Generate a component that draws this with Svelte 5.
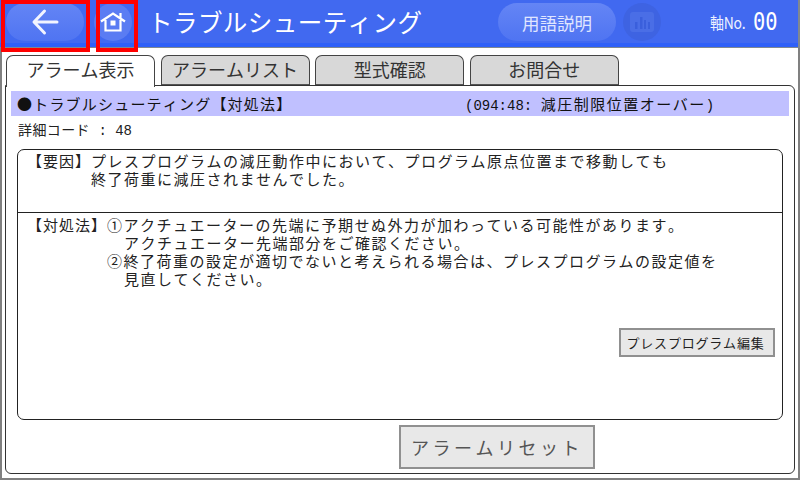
<script>
  const tabs = ['アラーム表示', 'アラームリスト', '型式確認', 'お問合せ'];
</script>

<div class="screen">
  <header class="header">
    <button class="pill back" aria-label="戻る">
      <svg width="30" height="30" viewBox="0 0 30 30"><path d="M27 15H5.500M14.500 4 4 15l10.500 11" fill="none" stroke="#f2f4ff" stroke-width="3" stroke-linecap="round" stroke-linejoin="round"/></svg>
    </button>
    <button class="round home" aria-label="ホーム">
      <svg width="26" height="20" viewBox="0 0 26 20"><path d="M1 9.500 13 1.500l12 8M5.500 8v10.500h15V8M20.500 1v6" fill="none" stroke="#fff" stroke-width="2.200"/><rect x="10.500" y="8.500" width="5" height="5" fill="#fff"/></svg>
    </button>
    <h1 class="title">トラブルシューティング</h1>
    <button class="pill terms">用語説明</button>
    <span class="round chart">
      <svg width="24" height="20" viewBox="0 0 24 20"><rect width="24" height="20" rx="3" fill="#4a6ee6"/><path d="M5 10h2.500v7H5zM10 5h2.500v12H10zM14 8h2v9h-2zM18 10h2v7h-2z" fill="#3a5fdc"/></svg>
    </span>
    <span class="axis"><span class="axis-label">軸No.</span><span class="axis-value">00</span></span>
  </header>

  <main class="body">
    <nav class="tabs">
      {#each tabs as t, i}
        <div class="tab" class:active={i === 0}>{t}</div>
      {/each}
    </nav>
    <section class="panel">
      <div class="banner">
        <span class="heading">●トラブルシューティング【対処法】</span>
        <span class="code"><span class="mono">{'(094:48: '}</span>減圧制限位置オーバー<span class="mono">)</span></span>
      </div>
      <div class="detail">詳細コード<span class="mono">{' : 48'}</span></div>
      <div class="box">
        <div class="cause">
          <span class="label">【要因】</span>
          <div>プレスプログラムの減圧動作中において、プログラム原点位置まで移動しても<br />終了荷重に減圧されませんでした。</div>
        </div>
        <div class="remedy">
          <span class="label wide">【対処法】</span>
          <div class="list">
            <div>①アクチュエーターの先端に予期せぬ外力が加わっている可能性があります。</div>
            <div class="indent">アクチュエーター先端部分をご確認ください。</div>
            <div>②終了荷重の設定が適切でないと考えられる場合は、プレスプログラムの設定値を</div>
            <div class="indent">見直してください。</div>
          </div>
          <button class="btn edit">プレスプログラム編集</button>
        </div>
      </div>
      <div class="footer"><button class="btn reset">アラームリセット</button></div>
    </section>
  </main>

  <div class="mark mark-back"></div>
  <div class="mark mark-home"></div>
</div>

<style>
  :global(body) { margin: 0; }
  .screen {
    position: relative;
    width: 800px; height: 480px; box-sizing: border-box;
    display: flex; flex-direction: column;
    background: #fff; overflow: hidden;
    font-family: "Noto Sans CJK JP", "Liberation Sans", sans-serif;
    font-kerning: none;
    text-spacing-trim: space-all;
    color: #222;
  }
  button { font-family: inherit; padding: 0; cursor: pointer; font-kerning: none; }
  .mono { font-family: "Liberation Mono", monospace; }
  .header {
    height: 48px; box-sizing: border-box; flex: none;
    display: flex; align-items: center;
    background: linear-gradient(#4169f0 92%, #2f60f8 92%);
    border-bottom: 1px solid #808890;
    border-right: 2px solid #808890;
    padding: 0 0 3px 6px;
  }
  .pill {
    border: none; color: #fff;
    background: linear-gradient(#6485f5, #4f74f2);
    display: flex; align-items: center; justify-content: center;
  }
  .back { width: 78px; height: 38px; border-radius: 19px; }
  .round {
    display: flex; align-items: center; justify-content: center;
    width: 38px; height: 38px; border-radius: 50%; border: none;
  }
  .home { margin-left: 10px; background: #5a7cf3; }
  .title {
    margin: 0 0 0 16px; width: 350px;
    font-size: 24.500px; font-weight: 400; color: #fff; line-height: 32px; white-space: nowrap;
    letter-spacing: .45px;
  }
  .terms { width: 118px; height: 38px; border-radius: 19px; font-size: 17.500px; color: #e0e6ff; }
  .chart { margin-left: 7px; background: #3e63e2; }
  .axis { margin-left: 49px; display: flex; align-items: center; gap: 8px; color: #eef1ff; }
  .axis-label { display: inline-block; width: 35px; font-size: 16px; transform: scaleX(.87); transform-origin: left center; white-space: nowrap; letter-spacing: -0.3px; }
  .axis-value { display: inline-block; width: 24px; font-size: 24px; font-family: "DejaVu Sans Mono", monospace; transform: scaleX(.85); transform-origin: left center; white-space: nowrap; color: #fff; }

  .body {
    flex: 1; min-height: 0; display: flex; flex-direction: column;
    border: solid #808080; border-width: 0 2px 2px 2px;
    padding: 7px 3px 4px 3px;
  }
  .tabs { display: flex; gap: 5.600px; padding-left: 1px; height: 31px; }
  .tab {
    width: 149px; height: 31px; box-sizing: border-box;
    background: #d8d8d8;
    border: 1px solid #444; border-bottom: 2px solid #555; border-radius: 7px 7px 0 0;
    font-size: 18px; line-height: 27px; text-align: center;
    color: #333;
  }
  .tab.active {
    background: #fff; border-bottom: none; height: 32px; position: relative; z-index: 1;
  }
  .panel {
    flex: 1; min-height: 0; box-sizing: border-box;
    border: 1px solid #333; border-radius: 0 6px 6px 6px;
    padding: 5px 5px 0 5px;
    display: flex; flex-direction: column;
    margin-top: -1px;
  }
  .banner {
    height: 25px; flex: none; display: flex; align-items: center;
    background: #c0c0ff; font-size: 15px; color: #111; padding-left: 6px;
    white-space: pre; letter-spacing: 1.500px;
  }
  .heading { width: 272px; letter-spacing: 1.200px; }
  .banner .mono { letter-spacing: 0; font-size: 14px; }
  .code { margin-left: 176px; }
  .detail { font-size: 14px; line-height: 18px; margin: 4px 0 0 7px; height: 29px; color: #222; white-space: pre; letter-spacing: .4px; }
  .detail .mono { letter-spacing: 0; }
  .box {
    margin: 0 6px 0 6px; height: 271px; flex: none; box-sizing: border-box;
    border: 1px solid #222; border-radius: 7px;
    display: flex; flex-direction: column;
    font-size: 15px; line-height: 18px; color: #222; letter-spacing: 1.500px;
  }
  .cause { height: 63px; flex: none; box-sizing: border-box; display: flex; padding: 2px 0 0 9px; border-bottom: 1px solid #222; white-space: nowrap; }
  .label { width: 64px; flex: none; letter-spacing: 1px; }
  .label.wide { width: 80px; }
  .remedy { flex: 1; position: relative; display: flex; padding: 3px 0 0 9px; white-space: nowrap; }
  .indent { padding-left: 17px; }
  .btn {
    background: #e8e8e8; border: 2px solid #909090; color: #222;
    white-space: nowrap;
  }
  .edit {
    position: absolute; right: 7px; top: 115px;
    width: 156px; height: 29px; font-size: 13px; letter-spacing: .8px; padding-right: 3px;
  }
  .footer { display: flex; padding: 5px 0 0 388px; }
  .reset { width: 196px; height: 44px; font-size: 18px; letter-spacing: 3.500px; color: #555; }
  .mark { position: absolute; top: 0; height: 52px; box-sizing: border-box; border: 4px solid #f00; }
  .mark-back { left: 1px; width: 89px; }
  .mark-home { left: 96px; width: 42px; }
</style>
